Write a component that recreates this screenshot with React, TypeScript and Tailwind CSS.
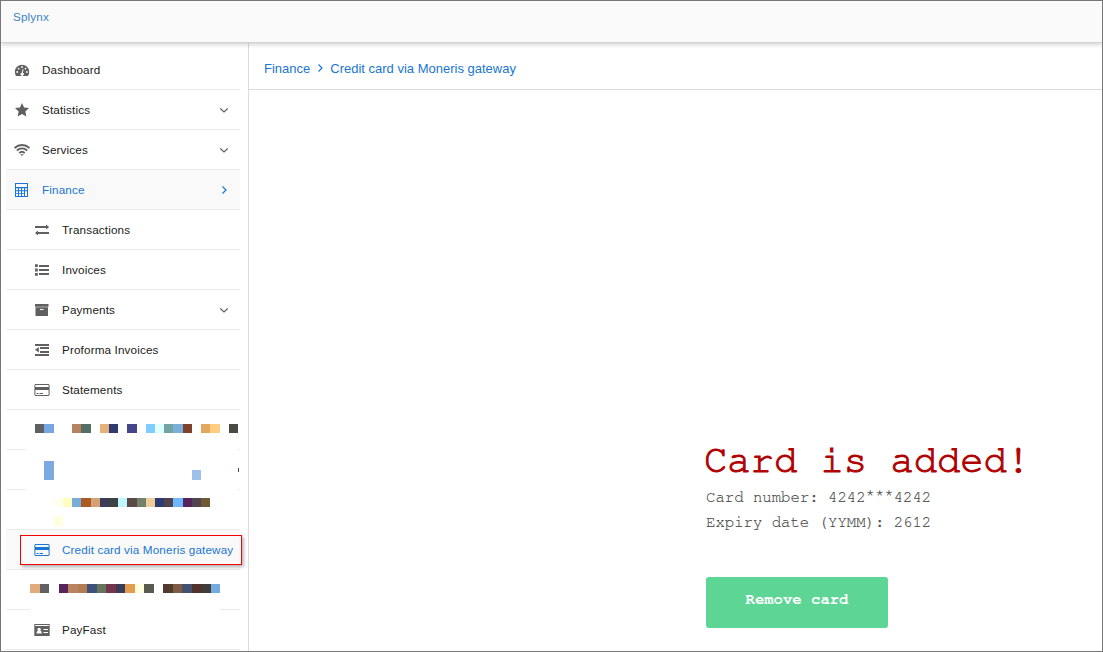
import React from "react";

type Tile = [width: number, color: string | null];

const rowOne: Tile[] = [
  [9, "#606060"], [10, "#77a7e0"], [18, null], [9, "#b5815e"], [10, "#547064"], [9, null],
  [9, "#e3b27a"], [9, "#2d3b70"], [9, null], [10, "#45458a"], [9, null], [9, "#80ccff"],
  [9, "#e0ffff"], [9, "#74a3a3"], [10, "#79b0da"], [9, "#80402c"], [9, null], [9, "#e2a85f"],
  [10, "#ffcc80"], [9, null], [9, "#474b42"],
];
const rowThree: Tile[] = [
  [9, "#ffffef"], [9, "#ffffc0"], [9, "#77aed9"], [10, "#ab5a24"], [9, "#d5a074"], [9, "#3d3b5a"],
  [9, "#3b4442"], [9, "#c0f7ff"], [10, "#5d4a45"], [9, "#73816d"], [9, "#f0cc9d"], [9, "#2d3c73"],
  [9, "#50454e"], [10, "#6db7ff"], [9, "#57245a"], [9, "#50454e"], [9, "#6f5a35"],
];
const rowFour: Tile[] = [
  [10, "#e2ab7c"], [9, "#606060"], [10, null], [9, "#57245c"], [10, "#b98360"], [9, "#b37c53"],
  [10, "#3d5278"], [9, "#64755d"], [10, "#73354b"], [9, "#3b3c5a"], [10, "#e49d50"], [9, "#ffffe0"],
  [10, "#5a5a50"], [9, null], [10, "#513b2d"], [9, "#7f5a44"], [10, "#44516e"], [10, "#50332a"],
  [9, "#403c3c"], [9, "#75a9df"],
];

function Tiles({ tiles }: { tiles: Tile[] }) {
  return (
    <div className="flex h-[9px]">
      {tiles.map(([w, c], i) => (
        <span key={i} className="h-full shrink-0" style={{ width: w, background: c ?? "transparent" }} />
      ))}
    </div>
  );
}

const icons = {
  dashboard: (
    <>
      <path d="M2 14Q.8 12 .8 9.800A7.200 7 0 0 1 15.200 9.800Q15.200 12 14 14z" />
      <g fill="#fff">
        <circle cx="3.200" cy="10" r="0.900" />
        <circle cx="4.600" cy="6.600" r="0.900" />
        <circle cx="8" cy="5" r="0.900" />
        <circle cx="11.500" cy="6.600" r="0.900" />
        <circle cx="12.900" cy="10" r="0.900" />
        <path d="M8.700 7l.9.200-.8 3.600a1.600 1.600 0 1 1-.9-.1z" />
      </g>
    </>
  ),
  star: <path d="M8 1l2.100 4.500 4.900.600-3.600 3.400.9 4.900L8 12l-4.300 2.400.9-4.900L1 6.100l4.900-.6z" />,
  wifi: (
    <g fill="none" stroke="currentColor" strokeWidth="1.900">
      <path d="M.500 6a11 11 0 0 1 15 0" />
      <path d="M2.900 8.500a7.300 7.300 0 0 1 10.200 0" />
      <path d="M5.300 11a4 4 0 0 1 5.400 0" />
      <path d="M6.700 12.500h2.600L8 13.800z" fill="currentColor" strokeWidth="0.400" />
    </g>
  ),
  calculator: (
    <path fillRule="evenodd" d="M1 1h13v14H1zM2 2v3h11V2zM2 6.200v2h2v-2zm3 0v2h2v-2zm3 0v2h2v-2zm3 0v2h2v-2zM2 9.200v2h2v-2zm3 0v2h2v-2zm3 0v2h2v-2zM2 12.100v2h2v-2zm3 0v2h2v-2zm3 0v2h2v-2zm3-2.900v4.900h2V9.200z" />
  ),
  exchange: <path d="M1 4h11V2.500L15.200 5l-3.200 2.500V6H1zM15 10H4V8.500L1 11l3 2.500V12h11z" />,
  list: <path d="M1 2.200h2.800V5H1zM5 3h10v2H5zM1 6.600h2.800v2.800H1zM5 7h10v2H5zM1 11h2.800v2.800H1zM5 11h10v2H5z" />,
  archive: <path fillRule="evenodd" d="M1 2h13.500v2.700H1zm.500 3.300h12.500V14H1.500zM6 7v1h3.500V7z" />,
  outdent: <path d="M1 2h14v2H1zM6 5h9v2H6zM6 9h9v2H6zM1 12h14v2H1zM4.800 5v5.500L1 7.800z" />,
  card: <path fillRule="evenodd" d="M1.300 2h13.400l.9.900v10.200l-.9.900H1.300l-.9-.900V2.900zM1.400 3v2h13.200V3zm0 5V13h13.200V8zM2.500 11h2v1h-2zm3 0H9v1H5.500z" />,
  idCard: (
    <path fillRule="evenodd" d="M.300 2h15.400v12H.300zM1.200 3v.900h13.600V3zM9.500 7v1H14V7zm0 3v1H14v-1zM2.500 11.500h5.300c0-1.700-.7-2.500-1.500-2.800a1.700 1.700 0 1 0-2.300 0c-.8.300-1.500 1.100-1.500 2.800z" />
  ),
};

type IconName = keyof typeof icons;

function Icon({ name }: { name: IconName }) {
  return (
    <svg viewBox="0 0 16 16" fill="currentColor" className="size-4 shrink-0">
      {icons[name]}
    </svg>
  );
}

function Chevron({ right = false, className = "" }: { right?: boolean; className?: string }) {
  return (
    <svg viewBox="0 0 10 10" fill="none" stroke="currentColor" strokeWidth="1.200" className={`size-[10px] shrink-0 ${className}`}>
      <path d={right ? "M3.500 1.500 7 5 3.500 8.500" : "M1.300 3.500 5 7 8.700 3.500"} />
    </svg>
  );
}

interface ItemProps {
  icon: IconName;
  label: string;
  sub?: boolean;
  active?: boolean;
  arrow?: "down" | "right";
}

function Item({ icon, label, sub, active, arrow }: ItemProps) {
  return (
    <a
      className={`flex h-10 shrink-0 items-center whitespace-nowrap border-b border-[#ebebeb] ${arrow ? "pr-[11px]" : ""} ${sub ? "pl-7" : "pl-2"} ${active ? "bg-[#f9f9f9] text-[#1976d2]" : "text-[#212121]"}`}
    >
      <span className={active ? "text-[#1976d2]" : "text-[#606060]"}>
        <Icon name={icon} />
      </span>
      <span className="ml-3 flex-1">{label}</span>
      {arrow && <Chevron right={arrow === "right"} className={active ? "text-[#1976d2]" : "text-[#606060]"} />}
    </a>
  );
}

function Rule({ left, right }: { left: string; right: string }) {
  return (
    <div className="mt-auto flex h-px justify-between">
      <span className={`h-px bg-[#ebebeb] ${left}`} />
      <span className={`h-px bg-[#ebebeb] ${right}`} />
    </div>
  );
}

export default function App() {
  return (
    <div className="flex h-[652px] w-[1103px] flex-col overflow-hidden border border-[#777] bg-white font-['Liberation_Sans',Arial,sans-serif]">
      <header className="z-10 h-[42px] shrink-0 border-b border-[#d2d2d2] bg-[#fafafa] pl-3 pt-[9px] text-[11.700px] leading-[14px] tracking-[0.140px] text-[#3b83c4] shadow-[0_2px_4px_rgba(0,0,0,0.16)]">
        Splynx
      </header>
      <div className="flex min-h-0 flex-1">
        <nav className="flex w-[248px] shrink-0 flex-col overflow-hidden border-r border-[#dcdcdc] pl-[5px] pr-[8px] pt-[7px] text-[11.700px] tracking-[0.140px]">
          <Item icon="dashboard" label="Dashboard" />
          <Item icon="star" label="Statistics" arrow="down" />
          <Item icon="wifi" label="Services" arrow="down" />
          <Item icon="calculator" label="Finance" active arrow="right" />
          <Item sub icon="exchange" label="Transactions" />
          <Item sub icon="list" label="Invoices" />
          <Item sub icon="archive" label="Payments" arrow="down" />
          <Item sub icon="outdent" label="Proforma Invoices" />
          <Item sub icon="card" label="Statements" />
          <div className="flex h-10 shrink-0 flex-col pt-[14px]">
            <div className="pl-[29px]"><Tiles tiles={rowOne} /></div>
            <Rule left="w-5" right="w-[2px]" />
          </div>
          <div className="flex h-10 shrink-0 flex-col pt-[11px]">
            <div className="flex items-end pl-[38px]">
              <span className="h-[19px] w-[10px] bg-[#7da9e1]" />
              <span className="ml-[138px] h-[10px] w-[9px] bg-[#9dbfe9]" />
              <span className="mb-[8px] ml-[37px] h-[4px] w-px bg-[#3d4a78]" />
            </div>
            <Rule left="w-5" right="w-[2px]" />
          </div>
          <div className="flex h-10 shrink-0 flex-col border-b border-[#ebebeb] pt-[8px]">
            <div className="pl-12"><Tiles tiles={rowThree} /></div>
            <span className="ml-12 mt-[9px] h-[10px] w-[9px] bg-[#ffffdf]" />
          </div>
          <div className="relative shrink-0">
            <Item sub icon="card" label="Credit card via Moneris gateway" active />
            <span className="absolute left-[14px] top-[5px] h-[30px] w-[222px] border border-[#f80000] shadow-[2px_2px_3px_rgba(0,0,0,0.28)]" />
          </div>
          <div className="flex h-10 shrink-0 flex-col pt-[14px]">
            <div className="pl-6"><Tiles tiles={rowFour} /></div>
            <Rule left="w-6" right="w-5" />
          </div>
          <Item sub icon="idCard" label="PayFast" />
        </nav>
        <main className="flex flex-1 flex-col">
          <div className="flex h-[47px] shrink-0 items-center border-b border-[#dcdcdc] pl-[15px] pt-[5px] text-[13px] text-[#1976d2]">
            <span>Finance</span>
            <Chevron right className="-mt-[2px] ml-[5px] mr-[5px]" />
            <span>Credit card via Moneris gateway</span>
          </div>
          <section className="flex flex-col items-start pl-[457px] pt-[346px] font-['FreeMono','Courier_New','Liberation_Mono',monospace]">
            <h1 className="-ml-[2px] whitespace-nowrap text-[38.850px] leading-[49px] text-[#b00000] [-webkit-text-stroke:1px_#b00000]">Card is added!</h1>
            <p className="whitespace-nowrap text-[15.650px] leading-[25px] text-[#484848] [-webkit-text-stroke:0.150px_#484848]">
              Card number: 4242<span className="inline-block -translate-y-[2px]">***</span>4242
            </p>
            <p className="whitespace-nowrap text-[15.650px] leading-[25px] text-[#484848] [-webkit-text-stroke:0.150px_#484848]">Expiry date (YYMM): 2612</p>
            <button className="mt-[42px] h-[51px] w-[182px] rounded-[3px] bg-[#5cd595] pb-[5px] text-[15.600px] font-bold text-white">
              Remove card
            </button>
          </section>
        </main>
      </div>
    </div>
  );
}
